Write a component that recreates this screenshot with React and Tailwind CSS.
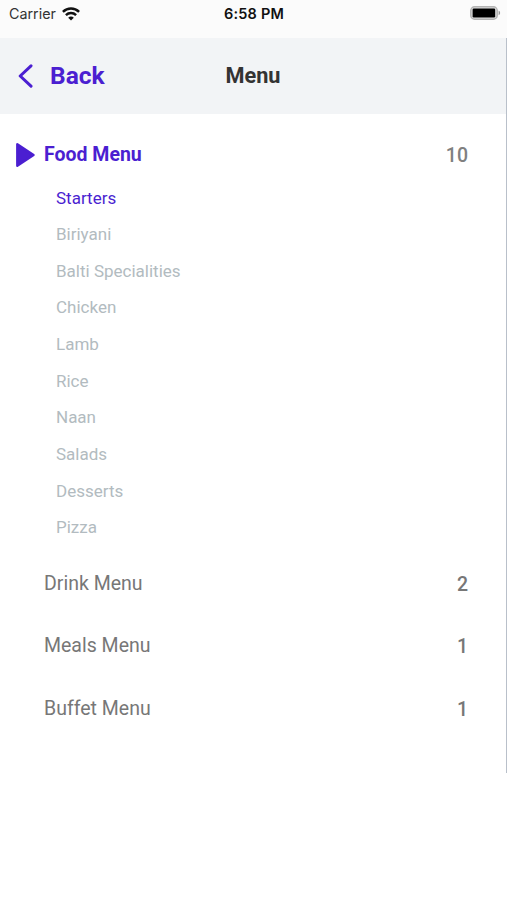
import React from 'react';

const foodItems = [
  'Starters',
  'Biriyani',
  'Balti Specialities',
  'Chicken',
  'Lamb',
  'Rice',
  'Naan',
  'Salads',
  'Desserts',
  'Pizza'
];

const otherMenus = [
  { name: 'Drink Menu', count: 2 },
  { name: 'Meals Menu', count: 1 },
  { name: 'Buffet Menu', count: 1 }
];

const WifiIcon = () => (
  <svg width="18" height="14" viewBox="0 0 18 14" fill="none" stroke="#111" strokeWidth="2.5">
    <path d="M0.9 4.9C5.5 0.5 12.5 0.5 17.1 4.9" />
    <path d="M3.9 8.1C6.8 5.4 11.2 5.4 14.1 8.1" />
    <path d="M9 13.5L6.2 10.7C7.8 9.2 10.2 9.2 11.8 10.7Z" fill="#111" stroke="none" />
  </svg>
);

const BatteryIcon = () => (
  <svg width="31" height="14" viewBox="0 0 31 14">
    <rect x="0.8" y="0.8" width="26.4" height="12.4" rx="3.8" fill="#e2e2e2" stroke="#b4b4b4" strokeWidth="1.5" />
    <rect x="2.6" y="2.6" width="22.6" height="8.8" rx="1.2" fill="#000" />
    <path d="M28.6 4.8C30.6 5.4 30.6 8.6 28.6 9.2Z" fill="#999" />
  </svg>
);

const StatusBar = () => (
  <div className="grid h-[38px] grid-cols-3 items-start bg-[#fbfbfb] pl-[9px] pr-[6px] pt-[4px] text-[#111] font-['Inter',sans-serif]">
    <div className="flex h-5 items-center gap-[6px] text-[14.3px] text-[#333]">
      <span>Carrier</span>
      <WifiIcon />
    </div>
    <div className="h-5 pr-[2px] text-center text-[14.5px] leading-5 font-semibold tracking-[0.2px]">6:58 PM</div>
    <div className="flex h-[18px] items-center justify-end">
      <BatteryIcon />
    </div>
  </div>
);

const Header = () => (
  <div className="grid h-[76px] grid-cols-3 items-center bg-[#f2f4f6] pl-[18px] pr-[18px]">
    <button className="flex items-center gap-[17px] text-[24.5px] font-bold text-[#4b1fd1]">
      <svg width="15" height="24" viewBox="0 0 15 24" fill="none" stroke="currentColor" strokeWidth="3" strokeLinecap="round" strokeLinejoin="round">
        <path d="M13 1.8L2.2 12L13 22.2" />
      </svg>
      <span className="pt-px">Back</span>
    </button>
    <h1 className="text-center text-[21.7px] font-bold text-[#333]">Menu</h1>
  </div>
);

const App = () => {
  return (
    <div className="h-[900px] w-full bg-white font-['Roboto',sans-serif]">
      <StatusBar />
      <div className="h-[735px] border-r border-[#b9c0ca]">
        <Header />

        {/* Expanded category */}
        <div className="mt-[15px] flex h-[51px] items-center pl-[15px] pr-[38px]">
          <svg className="mr-[9px]" width="20" height="26" viewBox="0 0 20 26" fill="#4b1fd1" stroke="#4b1fd1" strokeWidth="2.4" strokeLinejoin="round">
            <path d="M2.3 2.2V23.8L18.5 13Z" />
          </svg>
          <span className="flex-1 pt-px text-[19.5px] font-bold text-[#4b1fd1]">Food Menu</span>
          <span className="pt-[2px] text-[19.5px] font-medium text-[#808080]">10</span>
        </div>
        <ul className="pl-[56px] text-[17px] text-[#b2bbc0]">
          {foodItems.map((item, index) => (
            <li
              key={item}
              className={`flex h-[36.65px] items-center ${index === 0 ? 'text-[#4b1fd1]' : ''}`}
            >
              {item}
            </li>
          ))}
        </ul>

        {/* Collapsed categories */}
        <div className="mt-[6px] pl-[44px] pr-[38px] text-[19.5px] text-[#777]">
          {otherMenus.map((menu) => (
            <div key={menu.name} className="flex h-[62.4px] items-center justify-between">
              <span>{menu.name}</span>
              <span className="pt-[1.5px] font-medium">{menu.count}</span>
            </div>
          ))}
        </div>
      </div>
    </div>
  );
};

export default App;
